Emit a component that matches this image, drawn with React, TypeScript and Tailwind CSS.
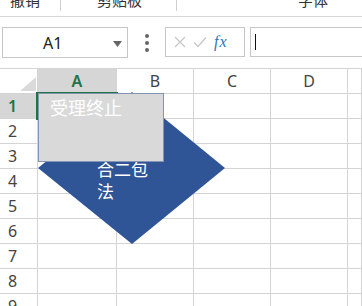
const cols = ["A", "B", "C", "D", ""];
const colWidths = ["w-[79px]", "w-[77px]", "w-[77px]", "w-[77px]", "flex-1"];
const rows = [1, 2, 3, 4, 5, 6, 7, 8, 9];

const font = "font-['Noto_Sans','Noto_Sans_CJK_SC',sans-serif]";

export default function App() {
  return (
    <div className={`relative w-[362px] h-[306px] overflow-hidden bg-white ${font} text-[#444]`}>
      {/* ribbon group labels */}
      <div className="h-[17px] border-b border-[#d6d6d6] flex text-[15px] leading-[15px] text-[#333] overflow-hidden">
        <div className="w-[60px] pl-[10px] -mt-[7px]">撤销</div>
        <div className="w-px h-[11px] bg-[#cfcfcf]" />
        <div className="w-[115px] pl-[36px] -mt-[7px]">剪贴板</div>
        <div className="w-px h-[11px] bg-[#cfcfcf]" />
        <div className="flex-1 pl-[121px] -mt-[7px]">字体</div>
      </div>

      {/* formula bar */}
      <div className="h-[51px] flex items-start pt-[10px]">
        <div className="ml-[2px] w-[126px] h-[31px] border border-[#c6c6c6] flex items-center relative">
          <span className="ml-[40px] text-[16px] text-[#222]">A1</span>
          <svg className="absolute left-[110px] top-[13px]" width="9" height="6" viewBox="0 0 9 6">
            <path d="M0 0h9L4.5 6z" fill="#666" />
          </svg>
        </div>
        <div className="w-[37px] h-[31px] flex flex-col items-center justify-center gap-[3px]">
          <span className="w-[4px] h-[4px] rounded-full bg-[#666]" />
          <span className="w-[4px] h-[4px] rounded-full bg-[#666]" />
          <span className="w-[4px] h-[4px] rounded-full bg-[#666]" />
        </div>
        <div className="w-[80px] h-[30px] border border-[#c6c6c6] flex items-center pl-[8px] gap-[4px]">
          <svg width="12" height="12" viewBox="0 0 12 12">
            <path d="M1 1l10 10M11 1L1 11" stroke="#c8c8c8" strokeWidth="1.3" />
          </svg>
          <svg width="14" height="12" viewBox="0 0 14 12" className="ml-[3px]">
            <path d="M1 6.5l4 4L13 1.5" stroke="#c8c8c8" strokeWidth="1.3" fill="none" />
          </svg>
          <span className="ml-[3px] text-[16px] italic text-[#2e75b6] font-['Liberation_Serif',serif] tracking-[1px]">fx</span>
        </div>
        <div className="ml-[5px] flex-1 h-[30px] border border-[#c6c6c6] border-r-0 flex items-center pl-[4px]">
          <span className="w-px h-[16px] bg-[#111]" />
        </div>
      </div>

      {/* grid */}
      <div className="border-t border-[#d4d4d4]">
        <div className="flex h-[25px]">
          <div className="w-[38px] border-r border-b border-[#d4d4d4] relative">
            <svg className="absolute right-[1px] bottom-[2px]" width="16" height="14" viewBox="0 0 16 14">
              <path d="M16 0v14H0z" fill="#dadada" />
            </svg>
          </div>
          {cols.map((c, i) => (
            <div
              key={i}
              className={`${colWidths[i]} border-r border-[#d4d4d4] flex items-center justify-center text-[16px] ${
                c === "A"
                  ? "bg-[#d6d6d6] text-[#217346] font-semibold border-b-2 border-b-[#217346]"
                  : "border-b"
              }`}
            >
              {c}
            </div>
          ))}
        </div>
        {rows.map((r) => (
          <div key={r} className="flex h-[25px]">
            <div
              className={`w-[38px] border-b border-[#d4d4d4] flex items-center pl-[8px] text-[16px] ${
                r === 1
                  ? "bg-[#d6d6d6] text-[#217346] font-semibold border-r-2 border-r-[#217346]"
                  : "border-r"
              }`}
            >
              {r}
            </div>
            {cols.map((_, i) => (
              <div key={i} className={`${colWidths[i]} border-r border-b border-[#d4d4d4]`} />
            ))}
          </div>
        ))}
      </div>

      {/* selected cell outline */}
      <div className="absolute left-[36px] top-[92px] w-[82px] h-[28px] border-2 border-[#217346]" />

      {/* diamond shape */}
      <svg className="absolute left-0 top-0" width="362" height="306" viewBox="0 0 362 306">
        <polygon points="38,168 132,92 225,168 132,244" fill="#2f5597" />
      </svg>
      <div className="absolute left-[97px] top-[159px] text-[17px] leading-[22px] text-white">
        合二包
        <br />
        法
      </div>

      {/* text box */}
      <div className="absolute left-[38px] top-[93px] w-[126px] h-[69px] bg-[#d9d9d9] border border-[#8296b4] pl-[11px] pt-[2px] text-[18px] leading-[24px] text-white">
        受理终止
      </div>
    </div>
  );
}
